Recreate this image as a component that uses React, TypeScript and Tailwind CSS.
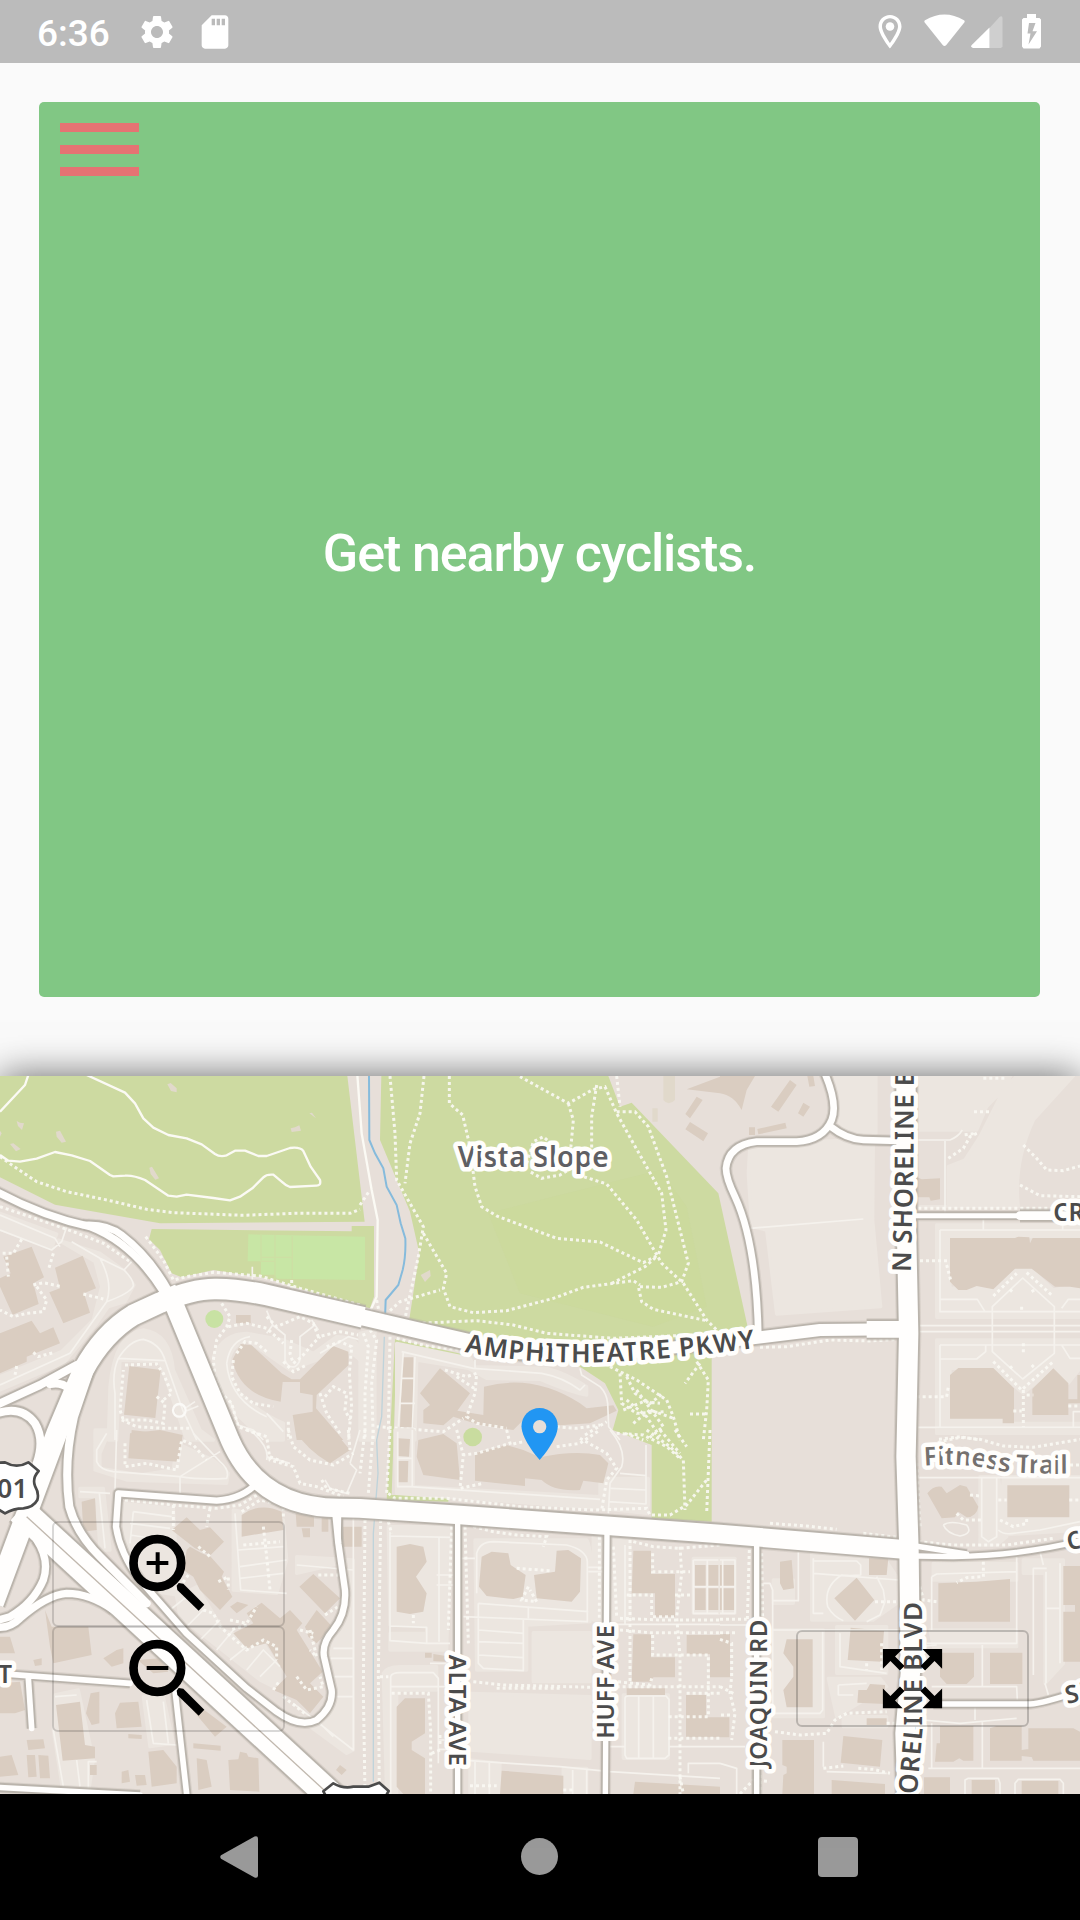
import { MdSettings, MdSdCard, MdZoomOutMap } from "react-icons/md";

type Tile = { at: string; lots: string; buildings: string; lanes: string; trails: string };

const tiles: Tile[] = [
  {
    at: "translate(0 0)",
    lots: "M0 520L170 582L155 625L0 568ZM175 600L300 640L370 690L402 735L375 785L325 800L290 850L190 970L0 1050V1010L185 935L280 840L305 740L285 665ZM330 1040Q345 880 430 870Q510 880 520 990L600 1170L640 1200H560L480 965L360 960L350 1200H325ZM640 950Q670 880 740 880L850 900L940 940L1010 890Q1070 890 1080 930L1080 960Q1020 900 950 960L870 990L740 900Q660 930 700 1040Q760 1110 850 1150V1200H810Q650 1110 640 950Z",
    buildings: "M10 650L95 620L132 712L100 730L116 792L38 824L0 740V715L32 700ZM165 683L248 647L288 745L252 760L270 818L190 850L148 757L180 745ZM0 880L95 842L120 880L160 862L180 910L80 950V965L0 1000ZM388 978L482 990L466 1134L372 1124ZM395 1170L545 1188V1200H393ZM708 825H752V850H708ZM722 912L755 916L845 1000L875 1018H900L1000 918L1045 935L1046 975L950 1065L948 1105L1030 1200H890L878 1125L938 1115V1065L900 1058V1026H848L842 1085Q720 1065 697 960Z",
    lanes: "M0 525L165 595L180 620M0 570L155 630L185 605L200 560M215 605L300 655L372 690Q402 720 400 738Q390 760 320 785M300 655Q340 730 320 785L210 940L0 1035M395 665L372 690M345 1200L345 1060Q335 1000 355 955Q390 900 430 898Q480 910 495 960L550 1115L590 1200M355 955L495 962M800 812L818 855L800 880M818 855L855 885V960Q865 985 885 980Q900 970 900 955V890L945 855L935 840M945 855L955 870M555 1105L585 1085M560 1112L595 1098M690 1080L715 1155L760 1170L790 1200M800 1120L850 1175M680 970Q690 900 750 890M680 970Q690 1080 800 1130M1080 900L1045 890L960 940M757 680V720",
    trails: "M0 350L50 385L110 425L200 455L330 482L440 508L520 518L730 526L880 520H1050L1080 508M0 500L120 540L220 575L310 610L390 665M437 590L490 660L520 720L560 710L640 697L780 708L900 745L1080 795M65 598L40 640L0 640M20 650L25 710M160 640L145 690M100 735L130 728L185 740M110 740L140 780L130 815L80 820L40 830L0 810M250 762L310 777M100 937L115 950L160 938M50 978L45 1005M375 975L470 972L490 1000L515 1060L490 1080M470 1070L495 1090L490 1150L440 1140L370 1140L360 1110L370 990M365 1140L410 1160L490 1165L570 1165M665 790L690 830L680 860L650 900L640 960L645 1010L665 1060L695 1090L715 1160L780 1185M685 860L740 850L800 865L850 910M700 960L695 1010L720 1060L760 1090L820 1100M710 940L735 905L770 910L800 935M800 830L830 860L900 830L940 850L955 890L1020 875L1075 885M875 900L870 940L880 970L905 950L940 910L960 890M850 965L880 995L920 975M980 920L1020 905L1055 920L1048 1000L1055 1100L1045 1200M975 1070L1000 1040L1040 1060L1035 1110L1050 1140M960 1060L980 1120L1020 1180M875 720V750M865 1145L865 1200",
  },
  {
    at: "translate(1080 0)",
    lots: "M110 910L330 955L345 980L560 985Q620 1000 680 1040L680 1065Q640 1060 540 1018L380 1015L325 985L170 960L165 1200H110ZM0 880L45 870V1200H0Z",
    buildings: "M980 148L1080 110V160ZM1010 170L1028 180L990 235L976 222ZM990 246L1044 280L1030 304L976 268ZM128 952H160V1162H120ZM180 1060L240 985L330 1060L292 1112L370 1125L372 1040Q520 1000 660 1090L680 1105L760 1096L770 1112L690 1150L600 1156H525L490 1140L460 1170L360 1155L280 1130L250 1156L190 1150V1110L210 1095Z",
    lanes: "M125 935L340 985L545 1000Q610 1012 660 1050L675 1035M130 935L115 1160M345 960V985M165 950L157 1170M125 1015H165M122 1090H165M660 985L665 1005L720 1040Q740 1060 743 1090L746 1160L780 1200",
    trails: "M90 108L105 280L110 420L190 560L175 650L135 835M192 108L180 220L150 310L135 430M268 108V190L308 225L330 320L345 440L365 500L410 528L590 595L720 606L780 635L850 668L895 645L918 570L905 460L820 310L770 220L735 140L700 148L625 190L480 110M625 190L640 240L630 350M710 135L695 230V330M500 370L520 305L550 290L590 325L625 390L600 405L545 415L510 395M655 405L740 432L830 540L905 670L970 730L1040 840L1080 880M770 215H825L865 260L920 410L960 570L985 670L965 725L905 742L835 740L845 785L880 808L1040 842M190 580L260 700L250 745L270 800L340 818L440 812L580 775L670 742L820 722L840 735M755 730L855 680L890 650M90 812L120 785L240 750M170 850L350 842L460 855L560 880L760 895L1000 885M0 495L30 450M50 780L60 830M30 870L50 900L35 1030L40 1200M10 880L25 920L15 1060L15 1200M90 890L85 1170M110 895L200 918L300 930M255 990L320 1010L350 1000L345 1060L320 1130L350 1150L440 1165M290 1010L350 1050M50 1160L250 1175L310 1135M590 1160L650 1165L720 1155M675 1185L740 1145M770 108L780 200M750 980L830 1020L920 1080L940 1130L960 1200M780 1000L785 1090L830 1120L920 1115M800 1010L825 1060L870 1090L910 1060M800 1080L860 1130L900 1190M830 1050L910 1160L860 1200M790 1110L850 1085L900 1090M820 1150L870 1110L940 1135M1010 965L1045 1020L1040 1110L1030 1200M1020 970L975 1030M990 1122H1040M795 1180L850 1200",
  },
  {
    at: "translate(2160 0)",
    lots: "M90 310L350 302L460 310L458 540L482 800L170 822L140 570L95 560L85 400ZM345 108H468V280L400 285L350 240ZM595 108H872L780 290L735 360L685 380V500H600V500H895Q880 370 940 240L1060 108H890L800 200L770 270H595ZM650 555H1080V590H690V745L770 740L820 745L885 690H935L1000 750L1050 740H1080V832H650ZM650 900H1080V985L1045 1030L1000 985L910 1060L820 985H690V1140H850V1150H1080V1180H650Z",
    buildings: "M0 108H105L80 150L65 210Q40 165 0 160ZM210 120L230 135L175 215L153 200ZM262 108H280L285 138L268 140ZM250 188L270 200L250 230L234 220ZM87 262H105V285H87ZM112 267L196 248L200 265L115 283ZM592 412L605 418L660 415V478L632 482L628 472H592ZM690 594H885L895 590L928 592L930 610L938 594H1080V745L1050 740H1005L935 686H885L820 748L770 738L740 750H715L690 725ZM690 1005L715 984H820L882 1045V1150H848V1136H690ZM937 1047L1000 985L1045 1030V1125H937ZM1045 1078H1080V1090H1045ZM1072 1005H1080V1080H1072Z",
    lanes: "M90 565L430 537M590 300H690Q715 290 727 270M675 303V520M790 535V570M660 570H1080M660 570V815H795L772 778H660M795 815H1080M598 857H1080M598 875H1080M817 800L908 714L1003 800V940L908 1017L817 935ZM660 915H1080M660 915V1160M660 957H770L797 935V915M595 1162H1080M1025 805L1045 778H1080M1025 915L1050 955H1080M1060 1160V1115H1080M1028 555V570",
    trails: "M790 115H860M762 215H810M685 355L730 325L750 290L770 280L730 285M910 315L950 355L980 390L1030 392L1080 378M900 435L960 467L1080 470M595 505H1000M600 662H690M680 675L692 720M820 768L890 700M920 698L1000 770M870 755L880 745M935 755L945 748M905 800V815M820 965L905 1050L1000 965M870 985L880 975M935 975L945 985M910 910V940M910 1050V1160M590 1070H680L685 1040M880 1113H905M920 1065L940 1065M1045 1098H1080M120 922L200 920L330 900L450 903L530 898M657 1198L720 1190L780 1200",
  },
  {
    at: "translate(0 1170)",
    lots: "M240 175H310L330 360H300L290 200H240ZM370 220L520 235L530 410L560 500L440 480L380 400ZM700 240L850 270L860 390L830 490L700 480ZM285 0H330L300 70V115L420 135L520 120L530 40L640 90L685 130L680 160L380 150L285 120ZM530 500L590 470L670 600L790 640L840 720L840 780L780 750L540 560ZM890 380L1060 390V960L1040 970L890 860L950 870L1000 800L975 650L1035 550L1020 400L890 430ZM430 800H490L520 940L450 950ZM165 795L235 780L280 990L265 1092H190L160 900Z",
    buildings: "M390 10L480 0L548 15L535 95L385 85ZM245 215L285 205L290 300L250 305ZM515 300L560 262L600 300L630 292L672 335L632 375L585 355ZM570 350L605 370L632 380L672 425L665 440L697 500L660 540L600 480L580 440L550 420L560 360ZM725 255Q780 215 845 245L850 300L725 320ZM885 0H1000L1050 60L990 100Q920 60 885 0ZM887 250L942 255V290H890ZM965 260L985 255V305H965ZM905 295H930V322H910ZM1028 290H1080V350H1028ZM898 470L940 432L1020 505L975 550ZM690 530L712 515L745 525L710 550ZM740 550L785 518L840 565L870 540L907 580L890 600L968 725L930 760L970 800L930 850L890 810L820 780L860 740L830 690L800 640L740 655L700 610L760 580ZM915 590L950 540L997 590L950 640L925 620ZM0 620H30L45 670H0ZM135 540L155 590L265 590L275 675L160 700L150 650ZM100 690L125 685V705L105 708ZM310 685L350 660L370 655V700L335 710ZM413 690L480 685L505 725L460 730ZM0 760L60 755L75 840L45 850L0 850ZM168 825L240 815L255 945L285 950L285 985L188 992ZM272 790L298 785V880L275 885L258 850ZM360 818L415 815L425 890L350 895L345 850ZM565 825L600 830L680 890L645 920ZM80 930L130 928L135 955L85 960ZM80 975H105L110 1040L85 1042ZM115 975L145 977L150 1045H120ZM0 980L35 975L55 1035L0 1040ZM385 912L425 915V927L385 925ZM445 965L490 960L530 1010V1060L455 1070ZM580 940L662 947V962L580 955ZM590 985L620 990L635 1070L595 1080ZM685 990L715 988L720 965L740 970L745 980L775 985L778 1085L690 1080ZM365 1025L385 1020L390 1055L365 1060ZM405 1035L435 1035L440 1065L410 1067ZM270 1005H290V1035H270ZM1020 1005L1040 1020L1025 1035L1008 1020Z",
    lanes: "M240 185L330 190M298 190L315 355M350 0L345 180M320 10L290 60V95Q300 120 340 125L540 140Q600 150 680 145Q690 120 660 95L580 10M540 140V190M540 140L660 65M400 245L515 260M390 280L510 295M390 315L490 330M400 245L390 340M705 250L722 480L860 490M715 360L850 350M720 410L860 390M720 445L850 430M890 405L1060 420M975 150L990 175L1040 190L1070 120L1050 100M800 80L870 100M750 0Q810 50 800 90M1060 220V960L880 820M1000 655H1060M990 685H1060M990 740H1060M980 800H1060M950 870L1000 920M510 540L560 500M560 590L610 540M600 630L660 570M650 660L700 600M690 690L740 650M740 720L790 660L840 710M780 740L830 690M440 810L460 940L530 945M490 815L505 940M165 800L230 795M160 900L190 1070M265 1092V995H290M230 990L240 1070M1080 0L1050 100",
    trails: "M375 40V110L440 100L530 120L545 30L580 45L620 90M375 210L520 225L650 235L720 225L780 190L800 170M520 225V300M630 235L620 290M725 245L780 210L850 225V260M730 345L840 335M790 290L800 380L810 480M565 435L540 470M595 350L630 380M655 455L685 440V480M610 540L640 550L660 590L740 660L790 630L830 650V690M690 570L740 580L770 530M740 585L690 600M955 435L1020 435M975 555L1030 520L1020 500M930 600L950 680L930 660M900 600L940 610M890 740L920 780L970 770L960 740M820 780L840 750M850 800L920 855M740 0L800 20L810 90L880 110L900 160L950 170L1030 200M865 0L880 50L930 90L1000 105L1060 70M1045 0L1050 60M810 80L860 100M965 150L980 175L1050 190",
  },
  {
    at: "translate(1080 1170)",
    lots: "M105 0L160 0V170L720 200V145H865V225L860 250L720 235L110 190ZM85 290H270L260 660H90V610H200V585H90ZM345 330H680Q700 350 690 575L500 585V720H350ZM520 608H690V755H520ZM330 790L690 800V985L330 960ZM70 730Q80 710 120 710H230V780H110V1092H80ZM1000 385H1080V550H1000ZM790 795H925V985H790ZM330 990L420 1000V1092H330ZM610 1015L680 1015V1092H610ZM700 320H810V570H700Z",
    buildings: "M115 25L150 27L147 80L115 78ZM115 93H145L143 157H115ZM0 290V350H5V290ZM175 30L250 12L290 40L300 150L190 135L170 80ZM345 70L440 45L490 60L540 82Q640 60 720 75L745 100L730 160L670 152L660 180Q580 185 545 150L495 145V168L345 152ZM110 350L150 342L190 350L200 395L168 440L200 490L190 545L150 552L110 545ZM365 380L395 365L445 370L452 405L497 435L488 500L460 507L380 498L357 470ZM522 435L585 425L590 362L625 360L663 385L660 485L635 515L530 505ZM820 362H873V432H945V560H885V490H815ZM1005 405H1037V468H1005ZM1045 405H1080V468H1045ZM1005 475H1037V540H1005ZM1045 475H1080V540H1045ZM820 613H873V682H945V742H880L875 755H815ZM980 615H1080V742H1050V673H980ZM978 795H1038V862H1080V922H978ZM800 775H915V795H800ZM195 668H215V683H195ZM220 672L258 678V695L220 693ZM110 830L135 805H195V910L155 935V960L195 985V1092H130L110 1070ZM425 1022L610 1037V1092H420ZM825 1055L1080 1070V1092H820Z",
    lanes: "M113 5V170H150L720 208M157 0V170M113 85H155M90 305V632L200 640H270M90 318L270 322M237 320V635M90 588L200 592V640M230 435H280M230 465H280M300 385H345M350 490V370Q360 335 400 335L620 345Q680 360 682 395V575L560 570L310 560M355 520L685 545M355 520V700L370 715L490 722V570M355 600L490 610M355 635L490 640M355 675L490 683M505 530V565M685 412H730M685 425H730M795 345V585M750 583H1080M1000 390H1080M1000 390V550H1080M1000 470H1080M1042 390V550M92 1092V740Q95 728 120 728H220L235 745V1000M92 770H280M210 700H260M795 805Q795 798 805 798H918L927 808V975L915 985H800L795 975ZM836 800V985M880 800V985M750 950H795M927 950H1080M330 992L450 1000L600 1010L750 1025L1080 1045M345 995V1092M388 995V1092M638 1020V1092M680 1020V1092M985 1030V1000H1080M752 175L858 180M780 130L858 137M745 215L858 222V45M750 0Q800 60 785 110L750 160L745 250M235 930H280M235 958H280",
    trails: "M15 0L0 130M40 0L25 190M90 0L80 190M15 270L10 780L15 1092M62 270L55 730L58 1092M85 275L95 310M290 0L310 75L300 175L370 160M440 0L450 40L350 70L310 75M460 42L490 35M590 50L660 40L720 0M660 25L740 70L770 115L740 150L725 240M85 190L105 205L260 205L480 230L700 240L860 235L870 255L930 255L980 225L1040 150M275 290L265 600M315 290L325 640M340 290L400 305L470 315L560 320L550 350M470 415L570 422M505 470L485 510L530 515L510 480M718 320V570M760 350L770 560M810 330V610L810 770M820 335L880 350L960 355L1080 345M960 350L965 430L950 560L960 680V1092M878 370V425H990M800 495H875V560H950M780 565L900 570H1080M780 600L870 608H1080M878 615V675H1045V740H1045V860H925M945 495H990M875 745L870 765L770 755M340 755L430 765L700 772M410 775L600 775M770 770H1080M980 790H1080M925 925H1080M960 1040L970 1092M95 790H205L212 900V1092M215 970L240 960M240 915V950M60 740H85M330 1067H410M610 1080H640M160 555V580M860 0L930 50L970 90L975 240M945 0L980 50M900 0L960 70M770 10L850 15L920 50L960 85M1050 0L1040 250",
  },
  {
    at: "translate(2160 1170)",
    lots: "M650 0H1080V10H650ZM780 140H835L860 320L830 345H780ZM275 365H480L530 440V520L460 570H275ZM910 390H1030V700L975 760V430H910ZM0 385H45V550H0ZM160 600H310V860H160ZM350 590H500V730H350ZM325 745H480L500 770L350 860ZM370 860H500V890H370ZM640 400H890V450H640ZM630 600H890V650H640ZM850 140H1080V300L840 315ZM160 450H220V520H160Z",
    buildings: "M622 190Q640 165 665 170L680 190L720 165L740 170L775 230Q770 260 740 262L715 245L705 262L665 265ZM862 166H1048V262H862ZM180 395L215 390L222 475L190 480L180 460ZM410 443L463 510L405 572L343 505ZM447 385H505L500 435H447ZM0 405H45V470H0ZM0 475H45V540H0ZM392 593L492 602L485 695L383 690ZM200 628H278V832H200L190 780L220 740V710L190 670ZM0 612H30V742H0ZM655 460L770 455L870 447V575H655ZM660 668H762V740L740 762H680L660 740ZM810 668H907V762H810ZM1030 408H1080V695H1030V545H1065V525H1030ZM415 780H440L450 762L495 765V822L412 818ZM440 865H500V885H440ZM370 918L487 930L480 1010L362 998ZM187 930H282V1092H187L190 1035L200 1030V1010L187 1005ZM335 1050L495 1062V1092H335ZM660 888H760V992H730L718 985L700 995H645L650 940H660ZM810 895L830 888H905V992H810ZM905 960L925 957L940 982L905 978ZM925 895H1060L1080 905V992H940L925 960ZM612 1042H690V1092H612ZM755 1050H825V1092H755ZM905 1052H1015V1092H905ZM0 862H28V922H0Z",
    lanes: "M595 143H1080M785 145V320L805 335L830 320V145M835 300Q850 315 880 310L960 300L1080 275M280 385V550H310M280 393H410L422 405V435L390 437L365 435Q310 470 323 530Q340 560 370 572M280 430L535 450M470 440L490 480L495 515L480 555L440 575M235 365V512H160M0 390H45V550H0M0 470H45M8 390V550M0 585H90M130 460H150L158 480V850H300L308 840V605M160 600H540M360 610V710L500 730M355 765V795H400M355 765L440 760M635 440L650 432L890 425V640H620M635 440V600M890 380V425M980 415H940V735M978 425V760M1020 400V700M978 535H1020M595 650L650 645M787 645V770M635 770H890L892 810M765 830V870M625 1015H1080M635 880V1015M787 875V1015M310 935V1010M320 1025L500 1030M610 870L720 880L830 870L890 865M735 1092V1050L745 1045H835L840 1060V1092M885 1092V1060L895 1048H1020L1030 1060V1092M670 285Q690 270 740 285Q760 310 720 318Q680 310 670 285M975 760L985 795M960 365L970 405M0 950H75M0 1000L50 1015V1092",
    trails: "M640 50L660 35L720 22L780 28L850 48L940 52L1080 28M1050 105H1080M750 195L780 198M835 210H860M1048 210H1080M710 250L730 270L790 270M840 270L880 290L920 280V265M590 100L600 290M595 335L700 345L860 345L1000 325M150 280L260 288L350 298M430 310L530 322M88 360L82 570M125 370L128 570M0 568H80M0 608H50M0 628L35 640V740L30 790L45 850L35 930M0 770L40 790M30 855H0M465 515H530M600 470L610 510L650 515M790 395V440L740 443L710 458M440 700V720M485 640L485 720M165 905L240 915L320 910L345 870L380 850L500 845M310 1015L370 1008M415 1015L460 1018L510 1030M500 880L530 880M60 1092L100 1050L150 1055M120 1035V1090",
  },
];

const parks =
  "M0 108H1042L1094 545L480 550L165 494L0 412ZM455 567L1055 574V558H1122V770L1110 805L970 768L800 715L640 690L545 712L515 700L480 630L447 598ZM1144 108H1825L1860 200L1895 188L2155 460L2245 870L2135 930V1445L1955 1435V1215L1838 1170L1855 1110L1815 1030L1740 980L1400 885L1228 838L1258 640L1230 515L1140 300ZM1185 898L1400 945L1395 960L1190 915L1175 1365L1345 1368V1385L1160 1380Z";

const roads: { d: string; w: number }[] = [
  { d: "M-10 1900L390 1930M85 1915L95 2065M525 1950L562 2280M-10 2242L420 2265", w: 17 },
  { d: "M1373 1440V2270M1821 1480L1816 2270M2270 1510V2270", w: 16 },
  { d: "M775 1325Q730 1377 650 1382L355 1360L348 1460Q360 1540 420 1620L560 1780L740 1945L830 2015Q900 2065 950 2040Q1000 2000 995 1950L972 1850Q965 1810 1000 1770Q1040 1720 1035 1650L1015 1510L1005 1410", w: 19 },
  { d: "M1018 1410L1016 1520", w: 12 },
  { d: "M-10 1762Q30 1765 60 1735Q140 1665 200 1660Q270 1660 340 1710M110 1500Q150 1560 130 1620Q100 1690 30 1730L-10 1742", w: 22 },
  { d: "M-10 1095L120 1035L230 975M150 1032Q185 1025 205 1045M-10 1120Q65 1095 105 1150Q135 1200 110 1270M280 960L222 1130Q190 1270 208 1400Q230 1480 300 1550L440 1690", w: 24 },
  { d: "M-10 455Q130 530 270 560Q400 610 490 755", w: 22 },
  { d: "M250 555Q320 550 365 585Q450 650 508 755", w: 20 },
  { d: "M2470 90Q2515 190 2495 240Q2470 300 2390 305H2270Q2185 315 2178 385Q2178 415 2205 470Q2270 610 2275 890M2492 260Q2540 298 2590 300L2700 303", w: 20 },
  { d: "M2745 527H3250", w: 15 },
  { d: "M3060 527H3250", w: 26 },
  { d: "M2745 1518L2900 1542M2745 1548L2860 1550Q3080 1545 3250 1500M2800 1992H3090Q3130 1990 3250 1950", w: 16 },
  { d: "M60 1410L1010 2285", w: 84 },
  { d: "M500 745L525 800L690 1200Q780 1405 1020 1404L1080 1405L1380 1425L2160 1482L2710 1528", w: 56 },
  { d: "M1400 908L1560 940L1780 950L2240 897L2460 870L2700 868", w: 36 },
  { d: "M1060 826L1240 868L1440 914", w: 48 },
  { d: "M2600 868L2710 868", w: 50 },
  { d: "M-20 1690L170 1180L250 990Q310 880 400 825L480 788Q580 745 650 747Q720 748 800 765L1090 832", w: 62 },
  { d: "M2718 100V500L2726 880L2718 1250L2727 1530L2731 1900L2715 2080L2722 2280", w: 58 },
];

function MapLabel({ id, path, size = 78, length, fill = "#4b4b4b", children }: {
  id: string; path: string; size?: number; length: number; fill?: string; children: string;
}) {
  return (
    <>
      <path id={id} d={path} fill="none" />
      <text
        fontSize={size}
        fontWeight={600}
        fill={fill}
        stroke="#fffefc"
        strokeWidth={27}
        strokeLinejoin="round"
        paintOrder="stroke"
        textLength={length}
      >
        <textPath href={`#${id}`} textLength={length}>{children}</textPath>
      </text>
    </>
  );
}

function StreetMap() {
  return (
    <svg className="block h-full w-full font-['Noto_Sans','Open_Sans',sans-serif]" viewBox="0 108 3240 2154">
      <rect y="100" width="3240" height="2170" fill="#e7dfd9" />
      <path d={parks} fill="#cddaa1" />
      <path d="M745 583L1095 590V720L830 716L825 704H783V664H743Z" fill="#c8e6a5" />
      <path d="M783 583V664H825V704M825 585V716M877 588V716M783 652H877" fill="none" stroke="#cddfa4" strokeWidth="4" />
      <path d="M1465 520L1660 470L1980 390L2060 500L2120 800L1960 860L1560 760Z" fill="#cbd99a" opacity=".5" />
      <g fill="#e1d9cb">
        <path d="M502 133L512 129L530 145V157L513 153ZM50 243L60 248L72 250L66 270L54 258ZM168 275L180 272L198 305L185 308L170 290ZM30 312L40 310L62 327L48 334ZM448 383L456 380L477 415L466 419L452 402ZM872 265L885 262L898 256L903 272L875 276ZM928 220L936 218L948 235ZM0 272L5 280L0 290Z" />
        <path d="M1262 705L1290 690L1292 708L1275 726ZM1990 108H2025V180Q2005 200 1990 180ZM1957 205H1973V245H1957Z" />
      </g>
      {tiles.map((t) => (
        <g key={t.at} transform={t.at}>
          <path d={t.lots} fill="#ece6e0" stroke="#ece6e0" strokeWidth="10" strokeLinejoin="round" />
          <path d={t.buildings} fill="#dacdc1" />
          <path d={t.lanes} fill="none" stroke="#f5f2ed" strokeWidth="5" strokeLinejoin="round" />
          <path d={t.trails} fill="none" stroke="#faf8f3" strokeOpacity=".92" strokeWidth="9" strokeDasharray="9 9" />
        </g>
      ))}
      <path
        d="M85 105L75 135L0 215M260 105L375 158L405 190L430 235L460 263L505 285L560 295L605 313L645 342Q660 352 680 346L705 332H735L775 348H800L870 324Q900 320 910 333L932 380L960 420Q964 438 948 437L870 441Q855 435 845 425L820 404Q800 402 790 412L757 445L720 470L690 481L640 474L560 464L530 470L505 467L435 420Q400 405 375 407L340 409L330 405L270 363L215 346L165 336L110 356L60 365L25 362L0 345M1072 105L1085 280L1115 450L1133 540L1130 770L1105 825"
        fill="none" stroke="#fbfaf4" strokeWidth="7" strokeLinejoin="round"
      />
      <path d="M1107 105L1108 300L1125 340L1150 385L1160 440L1190 495L1202 550L1216 595Q1218 650 1208 690L1195 735L1157 780L1155 835" fill="none" stroke="#86bbdc" strokeWidth="6" />
      <path d="M1153 890L1145 1130L1130 1200L1134 1300L1120 1480V2225" fill="none" stroke="#bfd3da" strokeWidth="4" />
      <circle cx="643" cy="837" r="27" fill="#c8e2a3" />
      <circle cx="1418" cy="1191" r="28" fill="#c9dc9f" />
      <circle cx="538" cy="1111" r="19" fill="none" stroke="#fbfaf7" strokeWidth="7" />
      {roads.map((r, i) => (
        <g key={i} fill="none" stroke="#b5afa7" strokeLinejoin="round">
          <path d={r.d} strokeOpacity=".3" strokeWidth={r.w + 18} />
          <path d={r.d} strokeOpacity=".85" strokeWidth={r.w + 11} />
        </g>
      ))}
      {roads.map((r, i) => (
        <path key={i} d={r.d} fill="none" stroke="#fffefd" strokeWidth={r.w} strokeLinejoin="round" strokeLinecap={r.w < 40 ? "round" : "butt"} />
      ))}
      <path d="M80 1430L1010 2285" fill="none" stroke="#c1b8ae" strokeWidth="4" />

      <path d="M-40 1278L0 1268L15 1267Q50 1287 85 1267L116 1293Q96 1315 105 1338Q118 1360 112 1380Q100 1402 70 1405Q40 1405 15 1420L-10 1405H-40Z" fill="#fff" stroke="#4b4b4b" strokeWidth="8" strokeLinejoin="round" />
      <text x="-55" y="1375" fontSize="80" fontWeight="600" fill="#4b4b4b" textLength="138">101</text>
      <path d="M990 2290L970 2254L1000 2230Q1030 2247 1060 2240H1105L1138 2228L1166 2253L1145 2290Z" fill="#fff" stroke="#4b4b4b" strokeWidth="8" strokeLinejoin="round" />

      <MapLabel id="vista" path="M1373 380H1900" size={84} length={453} fill="#5f5f63">Vista Slope</MapLabel>
      <MapLabel id="amph" path="M1394 936Q1560 968 1760 968Q2000 962 2290 920" length={876}>AMPHITHEATRE PKWY</MapLabel>
      <MapLabel id="shoreN" path="M2732 697L2740 400L2742 -100" length={610}>N SHORELINE B</MapLabel>
      <MapLabel id="shoreS" path="M2745 2370Q2752 2230 2767 2080L2767 1600" length={685}>SHORELINE BLVD</MapLabel>
      <MapLabel id="alta" path="M1348 1844V2270" size={72} length={334}>ALTA AVE</MapLabel>
      <MapLabel id="huff" path="M1843 2096V1700" size={70} length={340}>HUFF AVE</MapLabel>
      <MapLabel id="joaquin" path="M2300 2182V1700" size={72} length={443}>JOAQUIN RD</MapLabel>
      <MapLabel id="fitness" path="M2773 1277Q2900 1268 2990 1290Q3040 1303 3240 1300" size={76} length={432} fill="#75716f">Fitness Trail</MapLabel>
      <MapLabel id="cr" path="M3160 543H3400" size={74} length={160}>CRIT</MapLabel>
      <MapLabel id="charleston" path="M3204 1530L3400 1500" size={74} length={100}>CH</MapLabel>
      <MapLabel id="space" path="M3202 1992L3400 1945" size={74} length={90}>SP</MapLabel>
      <MapLabel id="street" path="M-50 1928H140" size={74} length={86}>ST</MapLabel>

      <path transform="translate(1525.6 1088.5) scale(7.78)" fill="#2196f3" d="M12 2C8.13 2 5 5.13 5 9c0 5.25 7 13 7 13s7-7.75 7-13c0-3.87-3.13-7-7-7z" />
      <circle cx="1619" cy="1160" r="20" fill="#e7dfd9" />
    </svg>
  );
}

function Magnifier({ plus }: { plus?: boolean }) {
  return (
    <svg className="mt-[11px] ml-[75px] h-[78px] w-[78px]" viewBox="0 0 234 234" fill="none" stroke="#000">
      <circle cx="85" cy="87" r="71.5" strokeWidth="26" />
      <path d="M143 155L145 168L209 230L226 212L163 149L149 147Z" fill="#000" stroke="none" />
      <path d={plus ? "M53 87H118M86 55V120" : "M53 87H118"} strokeWidth="12" />
    </svg>
  );
}

export default function App() {
  return (
    <div className="flex h-[1920px] w-[1080px] flex-col overflow-hidden bg-[#fafafa] font-[Roboto,sans-serif]">
      <header className="flex h-[63px] shrink-0 items-start justify-between bg-[#bbbbbb] text-white">
        <div className="flex items-start pl-[37px]">
          <span className="mt-[12px] w-[100px] text-[37px] leading-[44px] font-medium">6:36</span>
          <MdSettings className="mt-[12px] h-[40px] w-[40px]" />
          <MdSdCard className="mt-[12px] ml-[18px] h-[40px] w-[40px]" />
        </div>
        <div className="flex items-start pt-[14px] pr-[39px]">
          <svg className="h-[35px] w-[24px]" viewBox="0 0 24 35" fill="#fff">
            <path fillRule="evenodd" d="M12 1C5.5 1 .5 6 .5 12.5C.5 20.5 12 34.5 12 34.5S23.5 20.5 23.5 12.5C23.5 6 18.5 1 12 1ZM12 4.3C16.7 4.3 20 8 20 12.5C20 18 12 29 12 29S4 18 4 12.5C4 8 7.3 4.3 12 4.3Z" />
            <circle cx="12" cy="12.5" r="4.3" />
          </svg>
          <svg className="ml-[22px] h-[33px] w-[41px]" viewBox="0 0 41 33" fill="#fff">
            <path d="M.7 8.5Q-.2 7.2 1 6.3Q20.500-5.500 40 6.300Q41.200 7.200 40.300 8.500L22.300 31Q20.500 33 18.700 31Z" />
          </svg>
          <svg className="mt-[2px] ml-[6px] h-[33px] w-[32px]" viewBox="0 0 32 33" fill="#fff">
            <path opacity=".3" d="M18.500 12L28.800.700Q31.500-.500 31.500 2V30.500L30 32H18.500Z" />
            <path d="M18.500 11.500V32H2Q-.500 31 .5 29.300Z" />
          </svg>
          <svg className="ml-[19px] h-[35px] w-[19px]" viewBox="0 0 19 35" fill="#fff">
            <path fillRule="evenodd" d="M5 0H14V4H17.500L19 5.500V32.500L17.500 34.500H1.500L0 32.500V5.500L1.500 4H5ZM7 9H13.500L10.500 17.200H15L6.500 30.500L8.500 19.500H5.500Z" />
          </svg>
        </div>
      </header>

      <section className="shrink-0 pt-[39px] pr-[40px] pb-[79px] pl-[39px]">
        <div className="relative flex h-[895px] items-center justify-center rounded-[5px] bg-[#81c784]">
          <button className="absolute top-[21px] left-[21px] flex w-[79px] flex-col gap-[13px]" aria-label="Menu">
            <span className="h-[9px] w-full bg-[#e57373]" />
            <span className="h-[9px] w-full bg-[#e57373]" />
            <span className="h-[9px] w-full bg-[#e57373]" />
          </button>
          <h1 className="mt-[9px] text-[52px] leading-[60px] font-medium tracking-[-1.1px] whitespace-nowrap text-white">
            Get nearby cyclists.
          </h1>
        </div>
      </section>

      <main className="relative h-[718px] shrink-0 shadow-[0_0_36px_rgba(0,0,0,0.6)]">
        <StreetMap />
        <div className="absolute inset-0 flex items-end justify-between pr-[51px] pb-[62px] pl-[52px]">
          <div className="flex flex-col">
            <button className="flex h-[106px] w-[233px] items-start rounded-[6px] border-2 border-black/15" aria-label="Zoom in">
              <Magnifier plus />
            </button>
            <button className="-mt-px flex h-[106px] w-[233px] items-start rounded-[6px] border-2 border-black/15" aria-label="Zoom out">
              <Magnifier />
            </button>
          </div>
          <button className="mb-[5px] flex h-[97px] w-[233px] items-center justify-center rounded-[6px] border-2 border-black/20" aria-label="Fullscreen">
            <MdZoomOutMap className="h-[79px] w-[79px] text-black" />
          </button>
        </div>
      </main>

      <nav className="flex h-[126px] shrink-0 items-center justify-between bg-black pr-[222px] pl-[220px]">
        <svg className="h-[42px] w-[38px]" viewBox="0 0 38 42" fill="#999">
          <path d="M1 19.300L34.500.500Q38 -.500 38 2.500V39.500Q38 42.500 34.500 41.500L1 22.700Q-.500 21 1 19.300Z" />
        </svg>
        <span className="-mt-px ml-[2px] h-[37px] w-[37px] rounded-full bg-[#999999]" />
        <span className="h-[40px] w-[40px] rounded-[4px] bg-[#999999]" />
      </nav>
    </div>
  );
}
